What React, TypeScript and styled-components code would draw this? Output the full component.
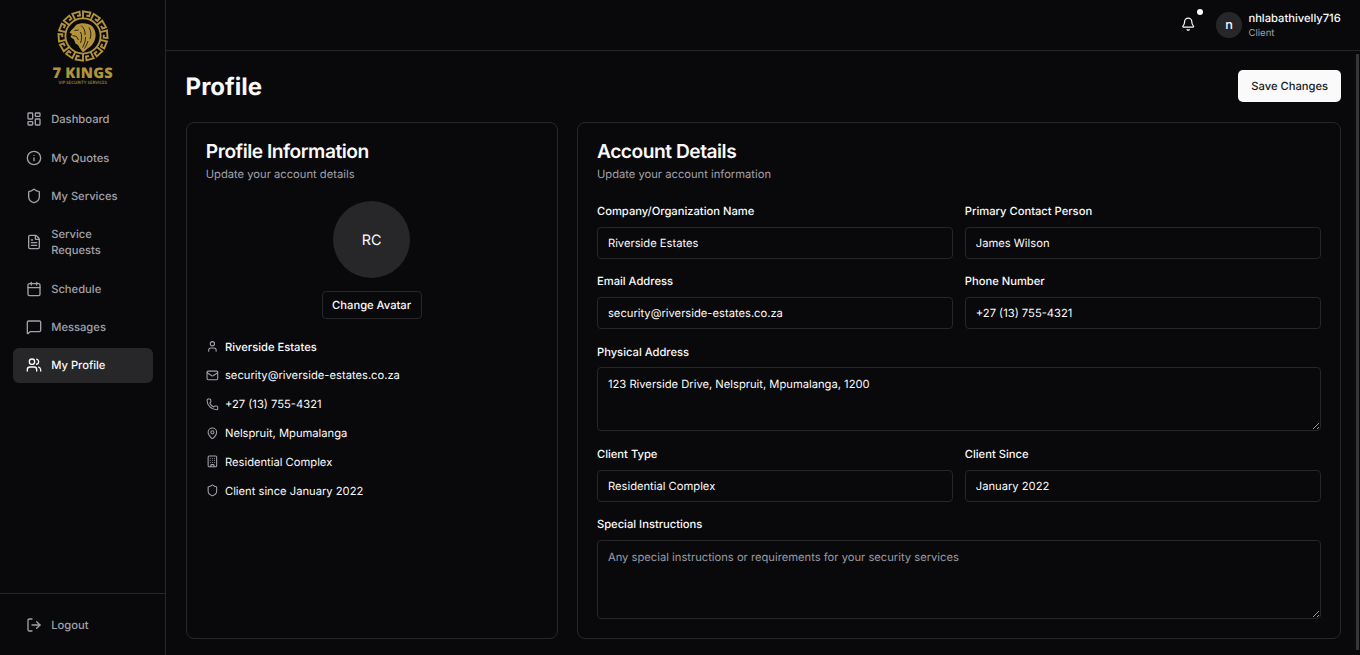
import React from 'react';
import styled, { createGlobalStyle } from 'styled-components';
import {
  LayoutDashboard,
  Info,
  Shield,
  FileText,
  Calendar,
  MessageSquare,
  Users,
  LogOut,
  Bell,
  User,
  Mail,
  Phone,
  MapPin,
  Building,
} from 'lucide-react';

const GlobalStyle = createGlobalStyle`
  html, body {
    margin: 0;
    height: 100%;
    background: #09090b;
    overflow: hidden;
  }
  * { box-sizing: border-box; }
  body {
    font-family: Inter, "Liberation Sans", sans-serif;
    font-feature-settings: "rlig" 1, "calt" 1;
    text-rendering: geometricPrecision;
    color: #fafafa;
  }
  input, textarea, button {
    text-rendering: geometricPrecision;
  }
`;

const Shell = styled.div`
  display: flex;
  width: 100%;
  height: 655px;
`;

const Sidebar = styled.aside`
  width: 166.4px;
  flex: none;
  display: flex;
  flex-direction: column;
  border-right: 1px solid #27272a;
`;

const LogoWrap = styled.div`
  height: 88px;
  padding-top: 10px;
  display: flex;
  flex-direction: column;
  align-items: center;
`;

const LogoTitle = styled.div`
  margin-top: 4px;
  font: 800 14.6px/14px "Open Sans", sans-serif;
  letter-spacing: 0.2px;
  color: #b2933c;
  white-space: nowrap;
`;

const LogoSub = styled.div`
  font: 600 4.4px/6px "Open Sans", sans-serif;
  color: #a08636;
  white-space: nowrap;
`;

const Nav = styled.nav`
  flex: 1;
  padding: 13.6px 12.8px 0;
  display: flex;
  flex-direction: column;
  gap: 3.2px;
`;

const NavItem = styled.a<{ $active?: boolean }>`
  display: flex;
  align-items: center;
  gap: 9.6px;
  padding: 9.6px 12.8px;
  border-radius: 6px;
  font-size: 11.2px;
  line-height: 16px;
  font-weight: 500;
  color: ${(p) => (p.$active ? '#fafafa' : '#a1a1aa')};
  background: ${(p) => (p.$active ? '#27272a' : 'transparent')};

  svg {
    flex: none;
  }
`;

const SidebarFoot = styled.div`
  height: 62px;
  padding: 13.4px 12.8px;
  border-top: 1px solid #27272a;
`;

const Column = styled.div`
  flex: 1;
  min-width: 0;
  display: flex;
  flex-direction: column;
`;

const Header = styled.header`
  height: 51.2px;
  flex: none;
  display: flex;
  justify-content: flex-end;
  align-items: center;
  gap: 20.6px;
  padding: 0 19.2px;
  border-bottom: 1px solid #27272a;
`;

const BellWrap = styled.div`
  position: relative;
  width: 16px;
  height: 16px;
  margin-bottom: 2px;
  display: flex;
  align-items: center;
  justify-content: center;

  &::after {
    content: '';
    position: absolute;
    top: -7px;
    right: -7.5px;
    width: 6px;
    height: 6px;
    border-radius: 50%;
    background: #fafafa;
  }
`;

const UserBox = styled.div`
  display: flex;
  align-items: center;
  gap: 6.4px;
`;

const SmallAvatar = styled.div`
  width: 25.6px;
  height: 25.6px;
  border-radius: 50%;
  background: #27272a;
  display: flex;
  align-items: center;
  justify-content: center;
  font-size: 12.8px;
  font-weight: 500;
`;

const UserName = styled.div`
  font-size: 11.2px;
  line-height: 16px;
  font-weight: 500;
`;

const UserRole = styled.div`
  margin-top: 1.5px;
  font-size: 9.6px;
  line-height: 12px;
  color: #a1a1aa;
`;

const Main = styled.main`
  flex: 1;
  min-height: 0;
  padding: 19.2px 19.2px 0;
  position: relative;
`;

const ScrollThumb = styled.div`
  position: absolute;
  top: 2.5px;
  right: 1px;
  bottom: 5px;
  width: 3px;
  background: #36363a;
`;

const TitleRow = styled.div`
  display: flex;
  justify-content: space-between;
  align-items: center;
  height: 32px;
`;

const PageTitle = styled.h1`
  margin: 2px 0 0;
  font-size: 24px;
  line-height: 32px;
  font-weight: 700;
`;

const SaveButton = styled.button`
  height: 32px;
  padding: 0 12.8px;
  border: 0;
  border-radius: 5px;
  background: #fafafa;
  color: #18181b;
  font: 500 11.2px/16px Inter, sans-serif;
`;

const Columns = styled.div`
  display: grid;
  grid-template-columns: 372px 1fr;
  gap: 19.2px;
  margin-top: 19.8px;
`;

const Card = styled.section`
  height: 517px;
  padding: 19.2px;
  border: 1px solid #27272a;
  border-radius: 8px;
`;

const CardTitle = styled.h2`
  margin: 0;
  font-size: 19.2px;
  line-height: 19px;
  font-weight: 600;
  letter-spacing: -0.48px;
`;

const CardSub = styled.p`
  margin: 4.6px 0 0;
  font-size: 11.2px;
  line-height: 16px;
  color: #a1a1aa;
`;

const AvatarColumn = styled.div`
  margin-top: 19.4px;
  display: flex;
  flex-direction: column;
  align-items: center;
  gap: 12.8px;
`;

const BigAvatar = styled.div`
  width: 76.8px;
  height: 76.8px;
  padding-top: 1px;
  border-radius: 50%;
  background: #27272a;
  display: flex;
  align-items: center;
  justify-content: center;
  font-size: 14.4px;
`;

const OutlineButton = styled.button`
  height: 28px;
  padding: 0 9.6px;
  border: 1px solid #27272a;
  border-radius: 4px;
  background: #09090b;
  color: #fafafa;
  font: 500 11.2px/16px Inter, sans-serif;
`;

const InfoList = styled.ul`
  list-style: none;
  margin: 19.7px 0 0;
  padding: 0;
  display: flex;
  flex-direction: column;
  gap: 12.8px;
`;

const InfoRow = styled.li<{ $strong?: boolean }>`
  display: flex;
  align-items: center;
  gap: 6.4px;
  min-height: 16px;
  font-size: 11.2px;
  line-height: 16px;
  font-weight: ${(p) => (p.$strong ? 500 : 400)};

  svg {
    flex: none;
    color: #a1a1aa;
  }
`;

const FormGrid = styled.div`
  margin-top: 23.8px;
  display: grid;
  grid-template-columns: 1fr 1fr;
  column-gap: 12px;
  row-gap: 17.6px;
`;

const Field = styled.label<{ $wide?: boolean }>`
  display: flex;
  flex-direction: column;
  gap: 9.6px;
  grid-column: ${(p) => (p.$wide ? '1 / -1' : 'auto')};
`;

const FieldLabel = styled.span`
  font-size: 11.2px;
  line-height: 11.2px;
  font-weight: 500;
`;

const Input = styled.input`
  height: 32px;
  width: 100%;
  padding: 0 10px;
  border: 1px solid #27272a;
  border-radius: 4px;
  background: #09090b;
  color: #fafafa;
  font: 400 11.2px/16px Inter, sans-serif;
  outline: none;
`;

const TextArea = styled.textarea<{ $tall?: boolean }>`
  display: block;
  height: ${(p) => (p.$tall ? '79px' : '64px')};
  width: 100%;
  padding: 7.7px 10px;
  border: 1px solid #27272a;
  border-radius: 4px;
  background: #09090b;
  color: #fafafa;
  font: 400 11.2px/16px Inter, sans-serif;
  outline: none;

  &::placeholder {
    color: #9a9aa2;
    opacity: 1;
  }
`;

// Gear ring made of square hooks, one per step round the circle
const polar = (r: number, deg: number) => {
  const a = ((deg - 90) * Math.PI) / 180;
  return `${(26 + r * Math.cos(a)).toFixed(2)} ${(26 + r * Math.sin(a)).toFixed(2)}`;
};

const ringHooks = Array.from({ length: 14 }, (_, i) => {
  const step = 360 / 14;
  const a = i * step;
  return `M${polar(17.6, a)}L${polar(24.6, a)}L${polar(24.6, a + step * 0.68)}L${polar(20.8, a + step * 0.68)}L${polar(20.8, a + step * 0.36)}`;
}).join('');

const LogoMark = () => (
  <svg width="52" height="52" viewBox="0 0 52 52" aria-hidden="true">
    <circle cx="26" cy="26" r="17.6" fill="none" stroke="#b2933c" strokeWidth="1.9" />
    <path d={ringHooks} fill="none" stroke="#b2933c" strokeWidth="1.9" />
    <path
      d="M19 15C23 12.500 31 12.500 35 16C38 19 39 23 38.500 27C38 32 34 37 30 39C28.500 40.500 27 42 25.500 42C24 40 22 37 21 35L18.500 33.500L17 29.500L13.500 27L15 24L12.500 22.500C14 20.500 15.500 19 17 17.500Z"
      fill="#b2933c"
    />
    <path
      d="M17.500 20.500L21.500 20M15.500 25.500L19.500 26.500L21.500 30M24 15.500C27 18 28.500 21 28 25M32 17.500C34 21 34.500 25 33 29M28.500 27C28.500 31 27.500 34 25.500 37.500M31 31C30 34 29 36 27.500 38.500M23.500 22C25 25 25 29 23.500 33"
      fill="none"
      stroke="#09090b"
      strokeWidth="0.8"
    />
  </svg>
);

const navItems = [
  { label: 'Dashboard', icon: LayoutDashboard },
  { label: 'My Quotes', icon: Info },
  { label: 'My Services', icon: Shield },
  { label: 'Service Requests', icon: FileText },
  { label: 'Schedule', icon: Calendar },
  { label: 'Messages', icon: MessageSquare },
  { label: 'My Profile', icon: Users, active: true },
];

const infoRows = [
  { text: 'Riverside Estates', icon: User, strong: true },
  { text: 'security@riverside-estates.co.za', icon: Mail },
  { text: '+27 (13) 755-4321', icon: Phone },
  { text: 'Nelspruit, Mpumalanga', icon: MapPin },
  { text: 'Residential Complex', icon: Building },
  { text: 'Client since January 2022', icon: Shield },
];

export default function App() {
  return (
    <Shell>
      <GlobalStyle />
      <Sidebar>
        <LogoWrap>
          <LogoMark />
          <LogoTitle>7 KINGS</LogoTitle>
          <LogoSub>VIP SECURITY SERVICES</LogoSub>
        </LogoWrap>
        <Nav>
          {navItems.map(({ label, icon: Icon, active }) => (
            <NavItem key={label} $active={active}>
              <Icon size={16} />
              <span>{label}</span>
            </NavItem>
          ))}
        </Nav>
        <SidebarFoot>
          <NavItem>
            <LogOut size={16} />
            <span>Logout</span>
          </NavItem>
        </SidebarFoot>
      </Sidebar>
      <Column>
        <Header>
          <BellWrap>
            <Bell size={14.4} />
          </BellWrap>
          <UserBox>
            <SmallAvatar>n</SmallAvatar>
            <div>
              <UserName>nhlabathivelly716</UserName>
              <UserRole>Client</UserRole>
            </div>
          </UserBox>
        </Header>
        <Main>
          <ScrollThumb />
          <TitleRow>
            <PageTitle>Profile</PageTitle>
            <SaveButton>Save Changes</SaveButton>
          </TitleRow>
          <Columns>
            <Card>
              <CardTitle>Profile Information</CardTitle>
              <CardSub>Update your account details</CardSub>
              <AvatarColumn>
                <BigAvatar>RC</BigAvatar>
                <OutlineButton>Change Avatar</OutlineButton>
              </AvatarColumn>
              <InfoList>
                {infoRows.map(({ text, icon: Icon, strong }) => (
                  <InfoRow key={text} $strong={strong}>
                    <Icon size={12.8} />
                    <span>{text}</span>
                  </InfoRow>
                ))}
              </InfoList>
            </Card>
            <Card>
              <CardTitle>Account Details</CardTitle>
              <CardSub>Update your account information</CardSub>
              <FormGrid>
                <Field>
                  <FieldLabel>Company/Organization Name</FieldLabel>
                  <Input defaultValue="Riverside Estates" />
                </Field>
                <Field>
                  <FieldLabel>Primary Contact Person</FieldLabel>
                  <Input defaultValue="James Wilson" />
                </Field>
                <Field>
                  <FieldLabel>Email Address</FieldLabel>
                  <Input defaultValue="security@riverside-estates.co.za" />
                </Field>
                <Field>
                  <FieldLabel>Phone Number</FieldLabel>
                  <Input defaultValue="+27 (13) 755-4321" />
                </Field>
                <Field $wide>
                  <FieldLabel>Physical Address</FieldLabel>
                  <TextArea defaultValue="123 Riverside Drive, Nelspruit, Mpumalanga, 1200" />
                </Field>
                <Field>
                  <FieldLabel>Client Type</FieldLabel>
                  <Input defaultValue="Residential Complex" />
                </Field>
                <Field>
                  <FieldLabel>Client Since</FieldLabel>
                  <Input defaultValue="January 2022" />
                </Field>
                <Field $wide>
                  <FieldLabel>Special Instructions</FieldLabel>
                  <TextArea $tall placeholder="Any special instructions or requirements for your security services" />
                </Field>
              </FormGrid>
            </Card>
          </Columns>
        </Main>
      </Column>
    </Shell>
  );
}
